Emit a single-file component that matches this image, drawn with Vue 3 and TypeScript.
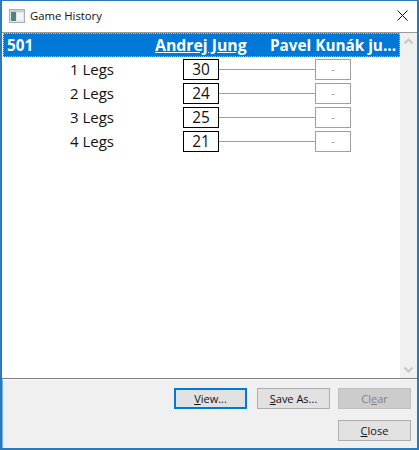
<script setup lang="ts">
interface Leg { label: string; score: number }
const legs: Leg[] = [
  { label: '1 Legs', score: 30 },
  { label: '2 Legs', score: 24 },
  { label: '3 Legs', score: 25 },
  { label: '4 Legs', score: 21 },
]
</script>

<template>
  <div class="window">
    <div class="titlebar">
      <svg class="appicon" width="16" height="14" viewBox="0 0 16 14">
        <rect x="0.5" y="0.5" width="15" height="13" fill="#e4e8e8" stroke="#a9b0b0" />
        <rect x="1" y="1" width="14" height="2" fill="#c8d0d0" />
        <rect x="2" y="3" width="5" height="9" fill="#4f8580" />
        <rect x="8" y="4" width="6" height="7" fill="#f4f6f6" />
      </svg>
      <span class="title">Game History</span>
      <svg class="close-x" width="11" height="11" viewBox="0 0 11 11">
        <path d="M0.5 0.5 L10.5 10.5 M10.5 0.5 L0.5 10.5" stroke="#111" stroke-width="1" fill="none" />
      </svg>
    </div>
    <div class="listwrap">
      <div class="list">
        <div class="head">
          <span class="h-game">501</span>
          <span class="h-p1">Andrej Jung</span>
          <span class="h-p2">Pavel Kunák ju...</span>
        </div>
        <div v-for="l in legs" :key="l.label" class="row">
          <span class="legs">{{ l.label }}</span>
          <span class="box win">{{ l.score }}</span>
          <span class="line"></span>
          <span class="box lose">-</span>
        </div>
      </div>
      <div class="scroll">
        <svg width="17" height="17" viewBox="0 0 17 17"><path d="M4.5 10.5 L8.5 6.5 L12.5 10.5" stroke="#c6c6c6" stroke-width="2" fill="none" /></svg>
        <svg width="17" height="17" viewBox="0 0 17 17"><path d="M4.5 6.5 L8.5 10.5 L12.5 6.5" stroke="#c6c6c6" stroke-width="2" fill="none" /></svg>
      </div>
    </div>
    <div class="panel">
      <div class="btnrow">
        <button class="btn focus"><u>V</u>iew...</button>
        <button class="btn"><u>S</u>ave As...</button>
        <button class="btn off">Cl<u>e</u>ar</button>
      </div>
      <div class="btnrow">
        <button class="btn"><u>C</u>lose</button>
      </div>
    </div>
  </div>
</template>

<style>
html, body { margin: 0; background: #fff; }
</style>

<style scoped>
.window {
  box-sizing: border-box;
  width: 419px;
  height: 450px;
  border: 2px solid #2b79b9;
  border-top-width: 1px;
  display: flex;
  flex-direction: column;
  font-family: "Open Sans", "Noto Sans", sans-serif;
  background: #f0f0f0;
  overflow: hidden;
}
.titlebar {
  height: 31px;
  box-sizing: border-box;
  flex: none;
  background: #fff;
  display: flex;
  align-items: center;
  padding: 0 9px 2px 7px;
  gap: 5px;
}
.appicon { flex: none; }
.title { font-size: 11.3px; color: #111; flex: 1; }
.close-x { flex: none; }
.listwrap {
  flex: none;
  height: 347px;
  box-sizing: border-box;
  border-top: 1px solid #9a9a9a;
  border-bottom: 1px solid #808080;
  background: #fff;
  display: flex;
}
.list { flex: 1; min-width: 0; }
.head {
  height: 24px;
  background: #0078d7;
  color: #fff;
  font-weight: 700;
  font-size: 15.3px;
  display: flex;
  align-items: center;
  margin-left: 1px;
  outline: 1px dotted #9cc8ec;
  outline-offset: -1px;
  white-space: nowrap;
}
.h-game { width: 152px; padding-left: 4px; box-sizing: border-box; }
.h-p1 { text-decoration: underline; width: 115px; font-size: 15.8px; }
.h-p2 { flex: 1; }
.row {
  height: 24px;
  display: flex;
  align-items: center;
  color: #111;
  font-size: 15px;
}
.legs { width: 181px; box-sizing: border-box; padding-left: 68px; }
.box {
  box-sizing: border-box;
  width: 36px;
  height: 21px;
  display: flex;
  align-items: center;
  justify-content: center;
  flex: none;
}
.win { border: 1px solid #000; color: #111; font-size: 15.4px; }
.lose { border: 1px solid #a0a0a0; color: #a0a0a0; font-size: 12px; }
.line { width: 96px; height: 1px; background: #a0a0a0; flex: none; }
.scroll {
  width: 17px;
  flex: none;
  background: #f0f0f0;
  display: flex;
  flex-direction: column;
  justify-content: space-between;
}
.panel {
  flex: 1;
  display: flex;
  flex-direction: column;
  gap: 11px;
  padding: 8px 6px 0 0;
  border-left: 1px solid #6fb8ee;
  border-top: 1px solid #f8f8f8;
}
.btnrow { display: flex; justify-content: flex-end; gap: 8px; }
.btn {
  box-sizing: border-box;
  width: 73px;
  height: 21px;
  padding: 0;
  background: #e1e1e1;
  border: 1px solid #adadad;
  font-family: "Open Sans", "Noto Sans", sans-serif;
  font-size: 11px;
  color: #111;
}
.focus { border: 2px solid #0078d7; margin-right: 2px; }
.off { background: #cccccc; border-color: #bfbfbf; color: #838383; }
</style>
